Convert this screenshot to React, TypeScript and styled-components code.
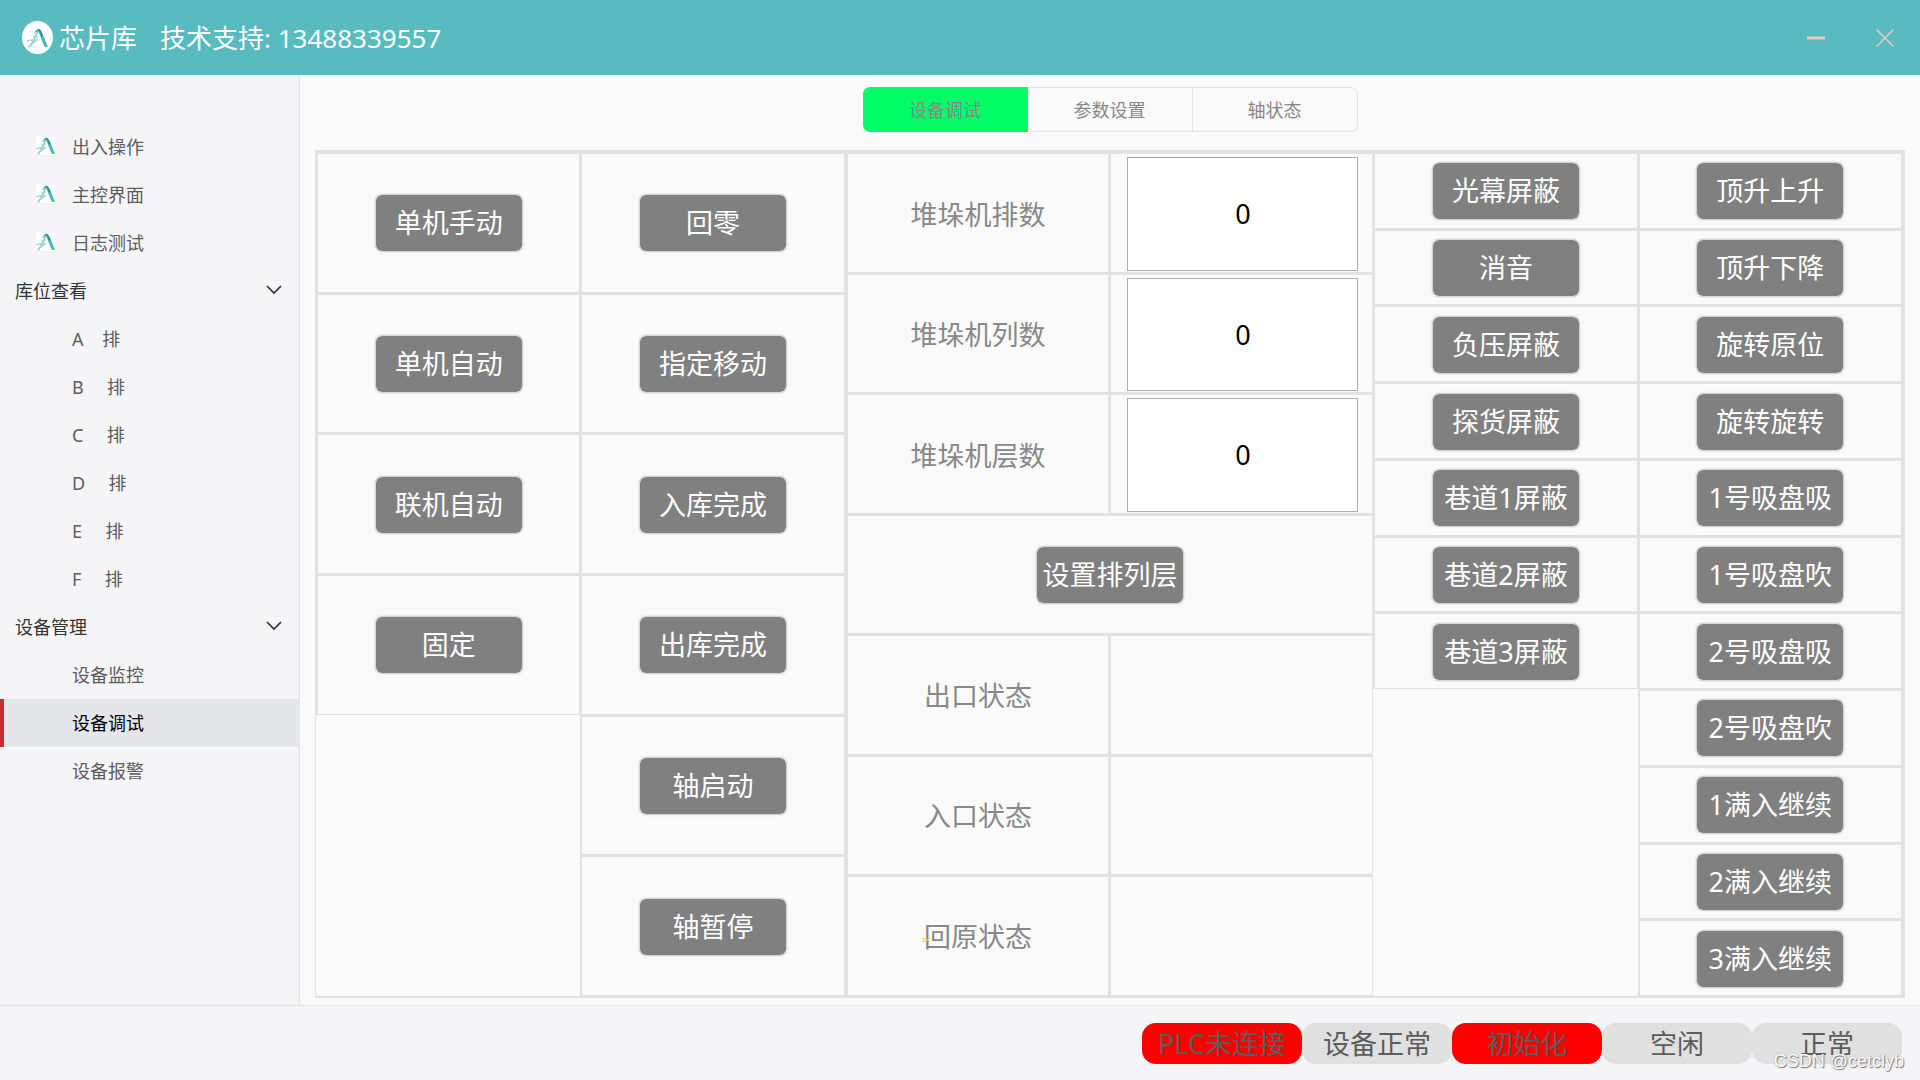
import React, { useState } from "react";
import styled, { createGlobalStyle } from "styled-components";

const line = "#e2e2e2";
const sans = `"Noto Sans", "Noto Sans CJK SC", sans-serif`;

const GlobalStyle = createGlobalStyle`
  * { box-sizing: border-box; }
  body { margin: 0; font-family: ${sans}; background: #fafafa; }
  button, input { font-family: inherit; }
`;

const Page = styled.div`
  position: relative;
  display: flex;
  flex-direction: column;
  min-height: 100vh;
`;

const Header = styled.header`
  display: flex;
  align-items: center;
  height: 75px;
  padding: 0 24px 0 22px;
  background: #57bbc0;
  color: #fff;
`;

const LogoBadge = styled.span`
  display: grid;
  place-items: center;
  width: 31px;
  height: 33px;
  margin-right: 6px;
  border-radius: 50%;
  background: #fff;
`;

const Brand = styled.h1`
  margin: 0 23px 0 0;
  padding-bottom: 2px;
  font-size: 26px;
  font-weight: 400;
`;

const Support = styled.span`
  flex: 1;
  padding-bottom: 2px;
  font-size: 26px;
  font-weight: 400;
`;

const WindowButton = styled.button`
  display: grid;
  place-items: center;
  width: 22px;
  height: 22px;
  margin-left: 47px;
  padding: 0;
  border: 0;
  background: none;
`;

const Body = styled.div`
  display: flex;
  flex: 1;
`;

const Sidebar = styled.nav`
  width: 300px;
  padding-top: 48px;
  border-right: 1px solid ${line};
  background: #f5f5f8;
`;

const NavLink = styled.a<{ $active?: boolean }>`
  display: flex;
  align-items: center;
  height: 48px;
  padding-bottom: 2px;
  padding-left: ${(p) => (p.$active ? 68 : 72)}px;
  border-left: ${(p) => (p.$active ? "4px solid #c62f2f" : "0")};
  background: ${(p) => (p.$active ? "#e5e6ea" : "transparent")};
  color: ${(p) => (p.$active ? "#000" : "#5c5c5c")};
  font-size: 18px;
  font-weight: 400;
  text-decoration: none;
  white-space: pre;
`;

const NavIconLink = styled(NavLink)`
  gap: 17px;
  padding-left: 36px;
`;

const IconTile = styled.span`
  display: grid;
  place-items: center;
  width: 19px;
  height: 18px;
  background: #fff;
`;

const NavGroup = styled.button`
  display: flex;
  align-items: center;
  justify-content: space-between;
  width: 100%;
  height: 48px;
  padding: 0 17px 2px 15px;
  border: 0;
  background: none;
  color: #333;
  font-size: 18px;
  font-weight: 400;
`;

const Main = styled.main`
  display: flex;
  flex: 1;
  flex-direction: column;
  padding: 12px 15px 7px;
  background: #fafafa;
`;

const Tabs = styled.div`
  display: flex;
  align-self: center;
  margin-bottom: 18px;
`;

const Tab = styled.button<{ $active: boolean }>`
  width: 165px;
  height: 45px;
  padding: 0 0 2px;
  border: 1px solid ${(p) => (p.$active ? "#00ff66" : line)};
  border-left-width: ${(p) => (p.$active ? 1 : 0)}px;
  background: ${(p) => (p.$active ? "#00ff66" : "#fafafa")};
  color: #888;
  font-size: 18px;
  font-weight: 400;

  &:first-child { border-radius: 7px 0 0 7px; }
  &:last-child { border-radius: 0 7px 7px 0; }
`;

const Panel = styled.div`
  display: grid;
  flex: 1;
  grid-template-columns: 1fr 1fr 2fr 1fr 1fr;
  border: solid ${line};
  border-width: 2px 3px 2px 1px;
`;

const Column = styled.div<{ $rows: number }>`
  display: grid;
  grid-template-rows: repeat(${(p) => p.$rows}, 1fr);
`;

const StackerGrid = styled.div`
  display: grid;
  grid-template-rows: repeat(7, 1fr);
  grid-template-columns: 1fr 1fr;
  border-left: 1px solid ${line};
`;

const Cell = styled.div<{ $wide?: boolean }>`
  display: flex;
  align-items: center;
  justify-content: center;
  grid-column: ${(p) => (p.$wide ? "span 2" : "auto")};
  min-width: 0;
  padding-top: 1px;
  border: solid ${line};
  border-width: 2px 1px 1px 2px;
`;

const FieldCell = styled(Cell)`
  align-items: stretch;
  padding: 3px 14px 1px 16px;
`;

const ActionButton = styled.button`
  width: 148px;
  height: 58px;
  padding: 0;
  border: 1px solid #d4d4d4;
  border-radius: 7px;
  background: #808080;
  box-shadow: 0 0 1px 1px #ececec;
  background-clip: padding-box;
  color: #fff;
  font-size: 27px;
  font-weight: 400;
  line-height: 36px;
  white-space: nowrap;
`;

const FieldLabel = styled.label`
  color: #888;
  font-size: 27px;
  font-weight: 400;
`;

const StateLabel = styled.span`
  position: relative;
  padding-bottom: 3px;
  color: #888;
  font-size: 27px;
`;

const Spark = styled.svg`
  position: absolute;
  left: -2px;
  bottom: 16px;
`;

const NumberInput = styled.input`
  width: 100%;
  min-width: 0;
  padding: 0;
  border: 1px solid #abadb3;
  background: #fff;
  color: #000;
  font-size: 27px;
  text-align: center;
`;

const Footer = styled.footer`
  display: flex;
  justify-content: flex-end;
  height: 75px;
  padding: 17px 18px 16px;
  border-top: 1px solid ${line};
  background: #f5f5f8;
`;

const StatusPill = styled.span<{ $alarm?: boolean }>`
  display: flex;
  align-items: center;
  justify-content: center;
  min-width: 150px;
  padding: 1px 16px 0;
  border-radius: 14px;
  background: ${(p) => (p.$alarm ? "#f00" : "#e0e0e0")};
  color: #5c5c5c;
  font-size: 27px;
  line-height: 36px;
`;

const Watermark = styled.span`
  position: absolute;
  right: 16px;
  bottom: 9px;
  color: #fff;
  font: 18px/20px "Liberation Sans", sans-serif;
  text-shadow: 1px 1px 1px #777, 0 0 1px #999;
`;

function Logo({ size }: { size: number }) {
  return (
    <svg width={size} height={size - 1} viewBox="0 0 21 19" fill="none" aria-hidden="true">
      <path d="M10.5 3.5C8.5 8 6 14 2.5 18.3" stroke="#8fd0d1" strokeWidth="1.8" />
      <path d="M1 18.2L4 18M6 8L11 8.6M0 12.8C4 10.5 7 12 11 11.2M3 15C6 15.8 7 14 9 12" stroke="#9ed8d8" strokeWidth="1.5" />
      <path d="M7 5.5C8 1.5 10 .2 12.5.4C14.8 1.5 17.5 10 21 18.2L17.6 18.4C15 13 13 6.5 11.5 3.5C10 3 8.5 4 7 5.5Z" fill="#4fb6b6" />
      <path d="M10 .8C13 0 14 2 16 7L14.6 8.5C13 4.5 12.5 2.5 10 .8Z" fill="#109a97" />
    </svg>
  );
}

function Chevron() {
  return (
    <svg width="16" height="10" viewBox="0 0 16 10" fill="none" aria-hidden="true">
      <path d="M1 1L8 8L15 1" stroke="#333" strokeWidth="1.6" />
    </svg>
  );
}

const shortcuts = ["出入操作", "主控界面", "日志测试"];
const racks = ["A    排", "B     排", "C     排", "D     排", "E     排", "F     排"];
const devices = ["设备监控", "设备调试", "设备报警"];
const tabs = ["设备调试", "参数设置", "轴状态"];
const modes = ["单机手动", "单机自动", "联机自动", "固定"];
const moves = ["回零", "指定移动", "入库完成", "出库完成", "轴启动", "轴暂停"];
const fields = [
  { id: "rows", label: "堆垛机排数" },
  { id: "columns", label: "堆垛机列数" },
  { id: "levels", label: "堆垛机层数" },
];
const states = ["出口状态", "入口状态", "回原状态"];
const shields = ["光幕屏蔽", "消音", "负压屏蔽", "探货屏蔽", "巷道1屏蔽", "巷道2屏蔽", "巷道3屏蔽"];
const lifts = [
  "顶升上升", "顶升下降", "旋转原位", "旋转旋转", "1号吸盘吸", "1号吸盘吹",
  "2号吸盘吸", "2号吸盘吹", "1满入继续", "2满入继续", "3满入继续",
];
const statuses = [
  { text: "PLC未连接", alarm: true },
  { text: "设备正常" },
  { text: "初始化", alarm: true },
  { text: "空闲" },
  { text: "正常" },
];

function ButtonColumn({ rows, items }: { rows: number; items: string[] }) {
  return (
    <Column $rows={rows}>
      {items.map((item) => (
        <Cell key={item}>
          <ActionButton type="button">{item}</ActionButton>
        </Cell>
      ))}
    </Column>
  );
}

export default function App() {
  const [tab, setTab] = useState(0);
  const [values, setValues] = useState<Record<string, string>>({ rows: "0", columns: "0", levels: "0" });

  return (
    <Page>
      <GlobalStyle />
      <Header>
        <LogoBadge><Logo size={21} /></LogoBadge>
        <Brand>芯片库</Brand>
        <Support>技术支持: 13488339557</Support>
        <WindowButton type="button" aria-label="最小化">
          <svg width="18" height="18" viewBox="0 0 18 18"><path d="M0 9H18" stroke="#efc4c2" strokeWidth="3" /></svg>
        </WindowButton>
        <WindowButton type="button" aria-label="关闭">
          <svg width="18" height="18" viewBox="0 0 18 18"><path d="M.5.5L17.5 17.5M17.5.5L.5 17.5" stroke="#efc4c2" strokeWidth="1.5" /></svg>
        </WindowButton>
      </Header>
      <Body>
        <Sidebar>
          {shortcuts.map((item) => (
            <NavIconLink key={item} href="#">
              <IconTile><Logo size={19} /></IconTile>
              {item}
            </NavIconLink>
          ))}
          <NavGroup type="button">库位查看<Chevron /></NavGroup>
          {racks.map((item) => <NavLink key={item} href="#">{item}</NavLink>)}
          <NavGroup type="button">设备管理<Chevron /></NavGroup>
          {devices.map((item) => (
            <NavLink key={item} href="#" $active={item === "设备调试"}>{item}</NavLink>
          ))}
        </Sidebar>
        <Main>
          <Tabs>
            {tabs.map((item, i) => (
              <Tab key={item} type="button" $active={i === tab} onClick={() => setTab(i)}>{item}</Tab>
            ))}
          </Tabs>
          <Panel>
            <ButtonColumn rows={6} items={modes} />
            <ButtonColumn rows={6} items={moves} />
            <StackerGrid>
              {fields.map(({ id, label }) => (
                <React.Fragment key={id}>
                  <Cell><FieldLabel htmlFor={id}>{label}</FieldLabel></Cell>
                  <FieldCell>
                    <NumberInput
                      id={id}
                      value={values[id]}
                      onChange={(e) => setValues({ ...values, [id]: e.target.value })}
                    />
                  </FieldCell>
                </React.Fragment>
              ))}
              <Cell $wide><ActionButton type="button">设置排列层</ActionButton></Cell>
              {states.map((item) => (
                <React.Fragment key={item}>
                  <Cell>
                    <StateLabel>
                      {item}
                      {item === "回原状态" && (
                        <Spark width="8" height="4" viewBox="0 0 8 4" aria-hidden="true">
                          <path d="M0 .5H2M3 .5H5M6 .5H8M1 2H7M0 3.5H2M3 3.5H5M6 3.5H8" stroke="#ffcc4d" />
                        </Spark>
                      )}
                    </StateLabel>
                  </Cell>
                  <Cell />
                </React.Fragment>
              ))}
            </StackerGrid>
            <ButtonColumn rows={11} items={shields} />
            <ButtonColumn rows={11} items={lifts} />
          </Panel>
        </Main>
      </Body>
      <Footer>
        {statuses.map(({ text, alarm }) => (
          <StatusPill key={text} $alarm={alarm}>{text}</StatusPill>
        ))}
      </Footer>
      <Watermark>CSDN @cetclyb</Watermark>
    </Page>
  );
}
